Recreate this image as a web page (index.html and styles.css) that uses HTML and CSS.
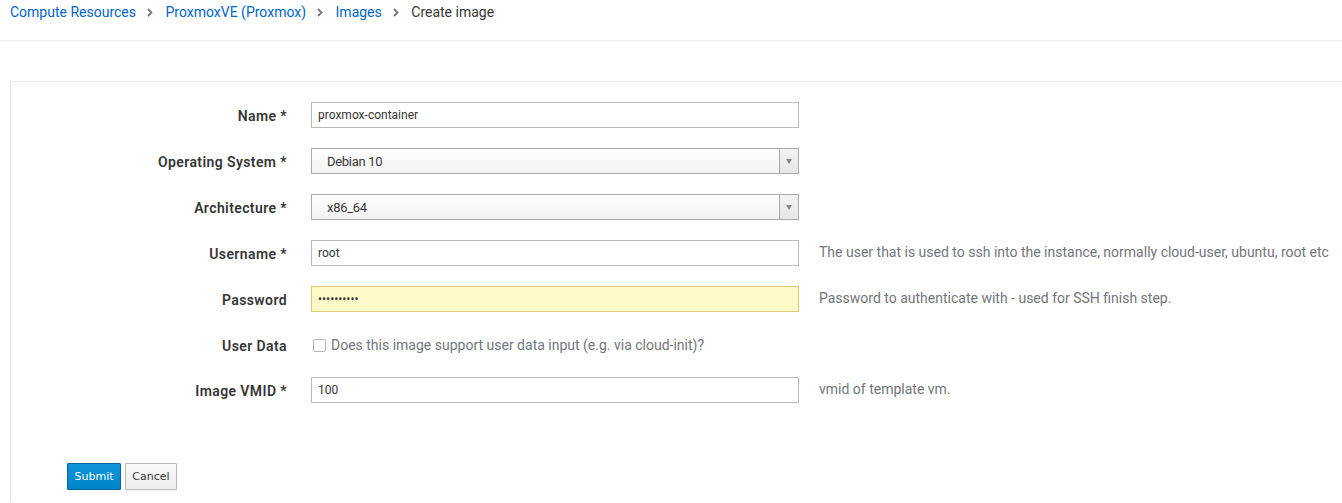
FILE: index.html
```html
<!DOCTYPE html>
<html>
<head>
<meta charset="utf-8">
<link rel="stylesheet" href="styles.css">
</head>
<body>
<nav class="breadcrumb">
  <a href="#">Compute Resources</a><svg class="sep" width="6" height="9" viewBox="0 0 6 9"><path d="M1 1 L4.5 4.5 L1 8" fill="none" stroke="#72767b" stroke-width="1.8"/></svg>
  <a href="#">ProxmoxVE (Proxmox)</a><svg class="sep" width="6" height="9" viewBox="0 0 6 9"><path d="M1 1 L4.5 4.5 L1 8" fill="none" stroke="#72767b" stroke-width="1.8"/></svg>
  <a href="#">Images</a><svg class="sep" width="6" height="9" viewBox="0 0 6 9"><path d="M1 1 L4.5 4.5 L1 8" fill="none" stroke="#72767b" stroke-width="1.8"/></svg>
  <span class="current">Create image</span>
</nav>
<main class="frame">
  <form class="form">
    <div class="row">
      <label class="label">Name *</label>
      <input class="control" type="text" value="proxmox-container">
    </div>
    <div class="row">
      <label class="label">Operating System *</label>
      <div class="select"><span class="select-text">Debian 10</span><span class="select-arrow"></span></div>
    </div>
    <div class="row">
      <label class="label">Architecture *</label>
      <div class="select"><span class="select-text">x86_64</span><span class="select-arrow"></span></div>
    </div>
    <div class="row">
      <label class="label">Username *</label>
      <input class="control" type="text" value="root">
      <span class="help">The user that is used to ssh into the instance, normally cloud-user, ubuntu, root etc</span>
    </div>
    <div class="row">
      <label class="label">Password</label>
      <input class="control autofill" type="text" value="••••••••••">
      <span class="help">Password to authenticate with - used for SSH finish step.</span>
    </div>
    <div class="row row-check">
      <label class="label">User Data</label>
      <span class="check-wrap"><span class="checkbox"></span><span class="check-text">Does this image support user data input (e.g. via cloud-init)?</span></span>
    </div>
    <div class="row">
      <label class="label">Image VMID *</label>
      <input class="control" type="text" value="100">
      <span class="help">vmid of template vm.</span>
    </div>
    <div class="actions">
      <button type="button" class="btn btn-primary">Submit</button>
      <button type="button" class="btn btn-default">Cancel</button>
    </div>
  </form>
</main>
</body>
</html>
```
FILE: styles.css
```css
* { box-sizing: border-box; }
html, body { margin: 0; padding: 0; background: #fff; }
body {
  font-family: Roboto, "Open Sans", sans-serif;
  color: #363636;
  height: 503px;
  overflow: hidden;
}
.breadcrumb {
  height: 41px;
  border-bottom: 1px solid #ededed;
  padding: 3px 0 0 10px;
  font-size: 14px;
  line-height: 18px;
}
.breadcrumb a { color: #0066cc; text-decoration: none; }
.breadcrumb .sep {
  margin: 0 9px 0 11px;
  vertical-align: 0px;
}
.breadcrumb .current { color: #363636; }
.frame {
  margin: 40px 0 0 10px;
  border-top: 1px solid #e6e6e6;
  border-left: 1px solid #e6e6e6;
  height: 421px;
}
.form { padding-top: 20px; }
.row {
  display: flex;
  align-items: center;
  height: 26px;
  margin-bottom: 20px;
}
.label {
  width: 276px;
  text-align: right;
  font-family: Roboto, sans-serif;
  font-weight: 600;
  font-size: 14px;
  letter-spacing: 0.4px;
  color: #363636;
  flex: none;
  position: relative;
  top: 1px;
}
.control {
  margin-left: 24px;
  width: 488px;
  height: 26px;
  border: 1px solid #bbbbbb;
  padding: 0 6px;
  font-family: Roboto, sans-serif;
  font-size: 12px;
  color: #363636;
  background: #fff;
  outline: none;
  flex: none;
}
.autofill { background: #fffac8; border-color: #e0c875; }
.select {
  margin-left: 24px;
  width: 488px;
  height: 26px;
  border: 1px solid #aaaaaa;
  background: linear-gradient(#ffffff, #f2f2f2);
  display: flex;
  align-items: center;
  flex: none;
}
.select-text {
  flex: 1;
  padding-left: 15px;
  font-size: 13px;
  letter-spacing: -0.3px;
  color: #363636;
}
.select-arrow {
  width: 19px;
  height: 100%;
  border-left: 1px solid #aaaaaa;
  background: linear-gradient(#f2f2f2, #e6e6e6);
  display: flex;
  align-items: center;
  justify-content: center;
}
.select-arrow::after {
  content: "";
  border-left: 3.5px solid transparent;
  border-right: 3.5px solid transparent;
  border-top: 5px solid #888;
}
.help {
  margin-left: 20px;
  font-size: 14px;
  color: #72767b;
  white-space: nowrap;
  position: relative;
  top: -1px;
}
.row-check { margin-bottom: 19px; }
.check-wrap {
  margin-left: 26px;
  display: flex;
  align-items: center;
}
.checkbox {
  width: 13px;
  height: 13px;
  border: 1px solid #b5b5b5;
  border-radius: 2px;
  background: #fff;
  margin-right: 5px;
}
.check-text {
  font-size: 14px;
  color: #72767b;
}
.actions {
  padding: 40px 0 0 56px;
  display: flex;
  gap: 4px;
}
.btn {
  font-family: "DejaVu Sans", Verdana, sans-serif;
  font-size: 11px;
  height: 27px;
  padding: 0 6px;
  border-radius: 1px;
  cursor: pointer;
}
.btn-primary {
  color: #fff;
  background: linear-gradient(#0d95db, #0084c8);
  border: 1px solid #00659c;
  width: 54px;
}
.btn-default {
  color: #363636;
  background: linear-gradient(#fafafa, #ededed);
  border: 1px solid #bbbbbb;
  width: 52px;
  box-shadow: 0 1px 2px rgba(0,0,0,0.08);
}
```
